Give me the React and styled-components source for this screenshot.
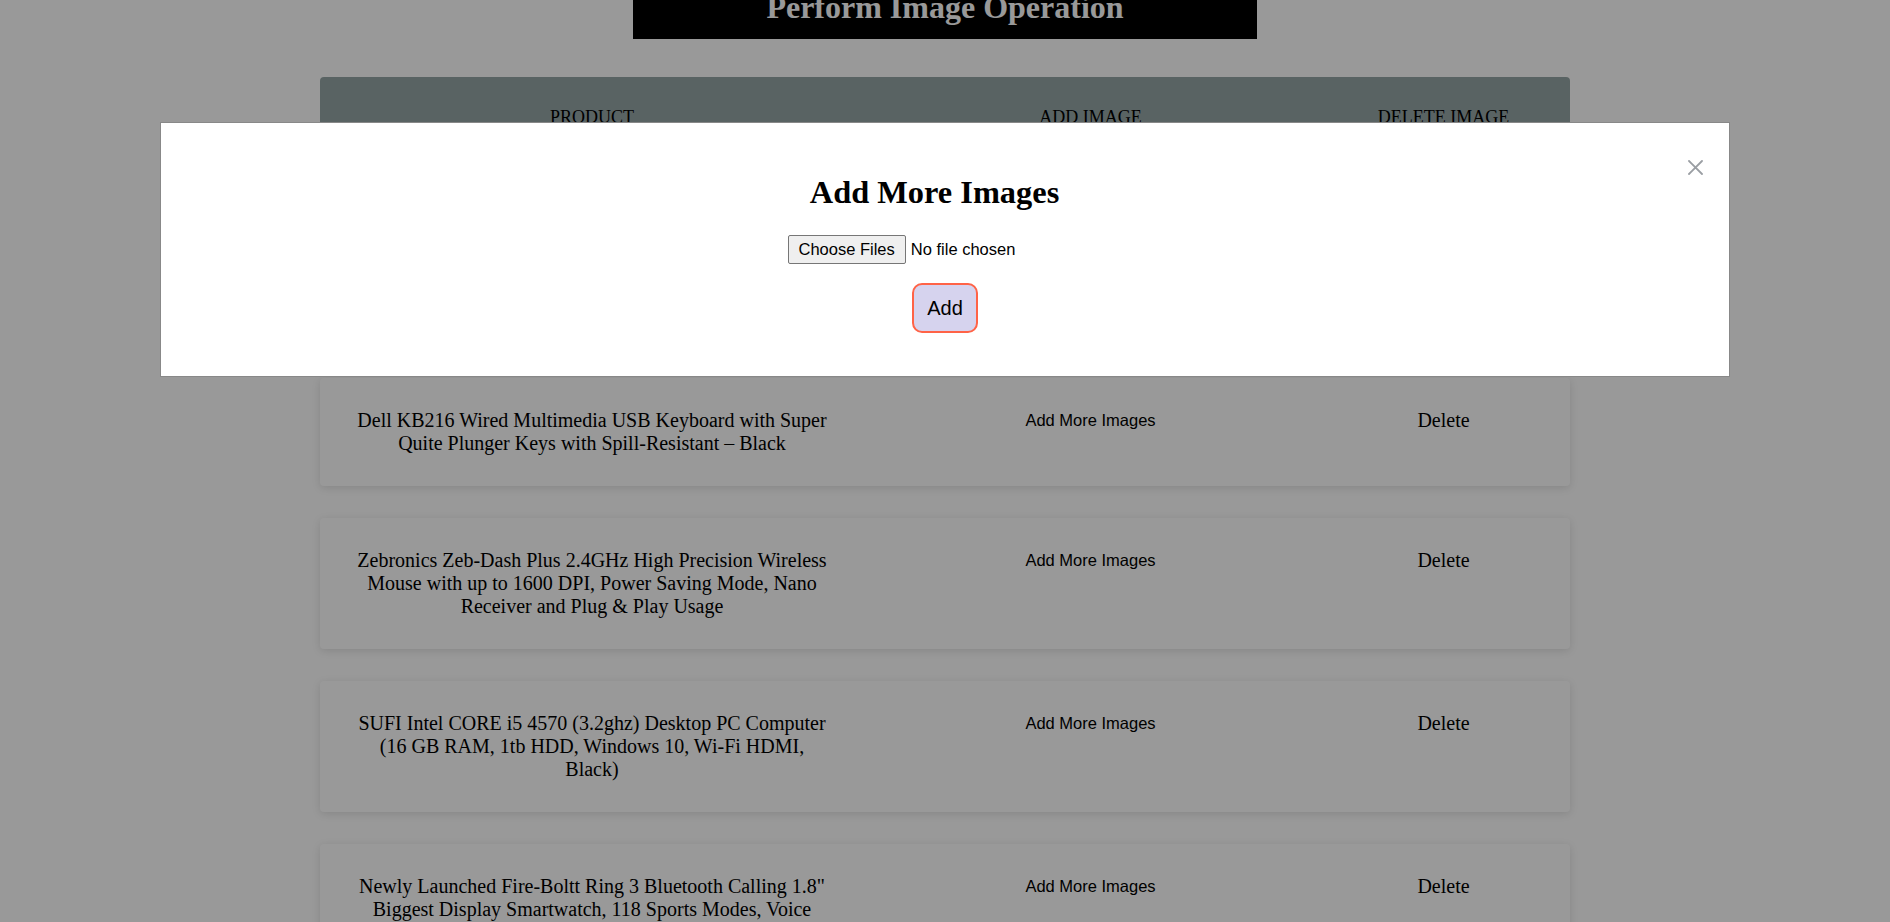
import React, { useLayoutEffect } from "react";
import styled, { createGlobalStyle } from "styled-components";

const GlobalStyle = createGlobalStyle`
    html, body {
        margin: 0;
        background: #fff;
    }

    body {
        font-family: "Liberation Serif", "Times New Roman", serif;
        color: #000;
    }
`

const Page = styled.div`
    padding: 0 8px 60px;
`

const Banner = styled.h1`
    width: 33.33%;
    margin: 21px auto 0;
    padding: 10px 0 13px;
    background-color: #000;
    color: #fff;
    text-align: center;
    font-size: 32px;
    line-height: 37px;
    font-weight: bold;
`

const Table = styled.div`
    width: 1250px;
    margin: 38px auto 0;
`

const HeadRow = styled.div`
    display: grid;
    grid-template-columns: 544px 453px 253px;
    padding: 30px 0;
    background-color: #95a5a6;
    border-radius: 4px 4px 0 0;
    font-size: 18px;
    line-height: 21px;
    text-align: center;
    text-transform: uppercase;
`

const List = styled.div`
    display: flex;
    flex-direction: column;
    gap: 32px;
    padding-top: 57px;
`

const Card = styled.div`
    display: grid;
    grid-template-columns: 544px 453px 253px;
    align-items: start;
    padding: 31px 0;
    background: #fff;
    border-radius: 4px;
    box-shadow: 0 2px 8px rgba(0, 0, 0, 0.12);
    text-align: center;
`

const Name = styled.div`
    padding: 0 35px;
    font-size: 20px;
    line-height: 23px;
`

const LinkButton = styled.button`
    justify-self: center;
    border: none;
    background: none;
    padding: 2px 0;
    font-family: "Liberation Sans", Arial, sans-serif;
    font-size: 16.5px;
    line-height: 19px;
    color: #000;
    cursor: pointer;
`

const DeleteText = styled.span`
    font-size: 20px;
    line-height: 23px;
    cursor: pointer;
`

const Overlay = styled.div`
    position: fixed;
    inset: 0;
    background: rgba(0, 0, 0, 0.4);
    z-index: 10;
`

const Modal = styled.div`
    position: fixed;
    top: 122px;
    left: 0;
    right: 0;
    margin: 0 auto;
    width: 1570px;
    box-sizing: border-box;
    padding: 20px;
    background: #fff;
    border: 1px solid #888;
    z-index: 11;
    display: flex;
    flex-direction: column;
    align-items: center;
`

const TitleRow = styled.div`
    display: flex;
    align-items: flex-start;
    width: 100%;
`

const Title = styled.h2`
    flex: 1;
    margin: 31px 0 0;
    text-align: center;
    font-size: 32.4px;
    line-height: 37px;
    font-weight: bold;
`

const CloseButton = styled.button`
    display: flex;
    width: 15px;
    height: 15px;
    margin: 17px 6px 0 0;
    padding: 0;
    border: none;
    background: none;
    cursor: pointer;
`

const FileInput = styled.input`
    width: 315px;
    margin-top: 24px;
    font-family: "Liberation Sans", Arial, sans-serif;
    font-size: 16.5px;
    color: #000;

    &::file-selector-button {
        font: inherit;
        padding: 4px 10px;
        margin-right: 5px;
        border: 1px solid #767676;
        border-radius: 2px;
        background-color: #efefef;
        color: #000;
    }
`

const AddButton = styled.button`
    margin: 19px 0 23px;
    padding: 11.5px 13px;
    font-family: "Liberation Sans", Arial, sans-serif;
    font-size: 20px;
    line-height: 23px;
    color: #000;
    background-color: #d6d3ee;
    border: 2px solid #ff6347;
    border-radius: 10px;
    cursor: pointer;
`

const products = [
    "HP Wired Mouse 100 with 1600 DPI Optical Sensor, USB Plug-and-Play, Ambidextrous Design, Built-in Scrolling and 3 Handy Buttons",
    "Dell KB216 Wired Multimedia USB Keyboard with Super Quite Plunger Keys with Spill-Resistant – Black",
    "Zebronics Zeb-Dash Plus 2.4GHz High Precision Wireless Mouse with up to 1600 DPI, Power Saving Mode, Nano Receiver and Plug & Play Usage",
    "SUFI Intel CORE i5 4570 (3.2ghz) Desktop PC Computer (16 GB RAM, 1tb HDD, Windows 10, Wi-Fi HDMI, Black)",
    "Newly Launched Fire-Boltt Ring 3 Bluetooth Calling 1.8\" Biggest Display Smartwatch, 118 Sports Modes, Voice Assistant, SpO2 & Heart Rate Monitoring (Black)",
]

const App = () => {
    useLayoutEffect(() => {
        window.scrollTo(0, 42)
    }, [])

    return (
        <>
        <GlobalStyle />
        <Page>
            <Banner>Perform Image Operation</Banner>
            <Table>
                <HeadRow>
                    <div>Product</div>
                    <div>Add Image</div>
                    <div>Delete Image</div>
                </HeadRow>
                <List>
                    {products.map((name) => (
                        <Card key={name}>
                            <Name>{name}</Name>
                            <LinkButton>Add More Images</LinkButton>
                            <DeleteText>Delete</DeleteText>
                        </Card>
                    ))}
                </List>
            </Table>
        </Page>
        <Overlay />
        <Modal>
            <TitleRow>
                <Title>Add More Images</Title>
                <CloseButton aria-label="close">
                    <svg width="15" height="15" viewBox="0 0 15 15">
                        <path d="M1 1 L14 14 M14 1 L1 14" stroke="#9a9ea3" strokeWidth="1.8" strokeLinecap="round" />
                    </svg>
                </CloseButton>
            </TitleRow>
            <FileInput type="file" multiple />
            <AddButton>Add</AddButton>
        </Modal>
        </>
    )
}

export default App
